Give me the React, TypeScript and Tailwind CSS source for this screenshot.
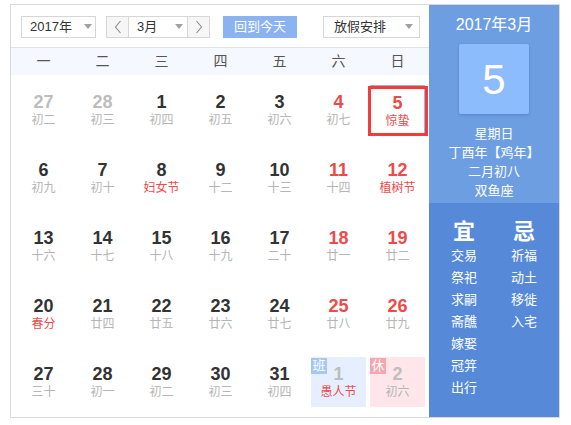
import React from 'react';

type Day = {
  n: number;
  l: string;
  other?: boolean;
  wknd?: boolean;
  fest?: boolean;
  sel?: boolean;
  tag?: 'ban' | 'xiu';
};

const rows: Day[][] = [
  [
    { n: 27, l: '初二', other: true },
    { n: 28, l: '初三', other: true },
    { n: 1, l: '初四' },
    { n: 2, l: '初五' },
    { n: 3, l: '初六' },
    { n: 4, l: '初七', wknd: true },
    { n: 5, l: '惊蛰', wknd: true, fest: true, sel: true },
  ],
  [
    { n: 6, l: '初九' },
    { n: 7, l: '初十' },
    { n: 8, l: '妇女节', fest: true },
    { n: 9, l: '十二' },
    { n: 10, l: '十三' },
    { n: 11, l: '十四', wknd: true },
    { n: 12, l: '植树节', wknd: true, fest: true },
  ],
  [
    { n: 13, l: '十六' },
    { n: 14, l: '十七' },
    { n: 15, l: '十八' },
    { n: 16, l: '十九' },
    { n: 17, l: '二十' },
    { n: 18, l: '廿一', wknd: true },
    { n: 19, l: '廿二', wknd: true },
  ],
  [
    { n: 20, l: '春分', fest: true },
    { n: 21, l: '廿四' },
    { n: 22, l: '廿五' },
    { n: 23, l: '廿六' },
    { n: 24, l: '廿七' },
    { n: 25, l: '廿八', wknd: true },
    { n: 26, l: '廿九', wknd: true },
  ],
  [
    { n: 27, l: '三十' },
    { n: 28, l: '初一' },
    { n: 29, l: '初二' },
    { n: 30, l: '初三' },
    { n: 31, l: '初四' },
    { n: 1, l: '愚人节', other: true, fest: true, tag: 'ban' },
    { n: 2, l: '初六', other: true, tag: 'xiu' },
  ],
];

const weekdays = ['一', '二', '三', '四', '五', '六', '日'];
const yi = ['交易', '祭祀', '求嗣', '斋醮', '嫁娶', '冠笄', '出行'];
const ji = ['祈福', '动土', '移徙', '入宅'];

function Caret() {
  return <span className="w-0 h-0 border-x-[4px] border-x-transparent border-t-[5px] border-t-[#a0a0a0]" />;
}

function Chevron({ dir }: { dir: 'l' | 'r' }) {
  return (
    <svg width="8" height="14" viewBox="0 0 8 14" fill="none">
      <path
        d={dir === 'l' ? 'M6.5 1 L1.5 7 L6.5 13' : 'M1.5 1 L6.5 7 L1.5 13'}
        stroke="#8a8a8a"
        strokeWidth="1.1"
      />
    </svg>
  );
}

function Cell({ d }: { d: Day }) {
  const numColor = d.other ? 'text-[#bdbdbd]' : d.wknd ? 'text-[#ee4a4a]' : 'text-[#333]';
  const lunarColor = d.fest ? 'text-[#ee4a4a]' : 'text-[#b5b5b5]';
  const bg =
    d.tag === 'ban' ? 'bg-[#e5efff]' : d.tag === 'xiu' ? 'bg-[#ffe6ea]' : '';
  return (
    <div className="pt-[8px] pl-[2px]">
      <div
        className={`relative w-[55px] h-[50px] flex flex-col items-center pt-[7px] ${bg} ${
          d.sel ? 'border border-[#8fb5f2] pt-[6px]' : ''
        }`}
      >
        {d.sel && (
          <span className="absolute -left-[3px] -right-[4px] top-[0px] -bottom-[2px] border-[3px] border-[#f53a3a]" />
        )}
        {d.tag && (
          <span
            className={`absolute left-0 top-[1px] w-[16px] h-[16px] text-white text-[13px] leading-[16px] text-center ${
              d.tag === 'ban' ? 'bg-[#a5c6f7]' : 'bg-[#f7a6b0]'
            }`}
          >
            {d.tag === 'ban' ? '班' : '休'}
          </span>
        )}
        <span className={`text-[18px] leading-[20px] font-bold ${numColor}`}>{d.n}</span>
        <span className={`text-[12px] leading-[16px] ${lunarColor}`}>{d.l}</span>
      </div>
    </div>
  );
}

export default function App() {
  return (
    <div
      className="pl-[10px] pt-[4px] bg-white w-[571px] h-[425px]"
      style={{ fontFamily: '"Liberation Sans", "Noto Sans CJK SC", sans-serif' }}
    >
      <div className="w-[550px] h-[414px] border border-[#d9d9d9] flex">
        <div className="w-[418px] flex flex-col">
          <div className="h-[43px] border-b border-[#e3e3e3] flex items-center pl-[10px] pt-[1px] text-[13px] text-[#333]">
            <div className="w-[75px] h-[22px] border border-[#d6d6d6] flex items-center justify-between pl-[8px] pr-[3px]">
              <span>2017年</span>
              <Caret />
            </div>
            <div className="ml-[10px] w-[104px] h-[22px] border border-[#d6d6d6] flex">
              <div className="w-[22px] bg-[#f6f6f6] border-r border-[#d6d6d6] flex items-center justify-center">
                <Chevron dir="l" />
              </div>
              <div className="flex-1 flex items-center justify-between pl-[8px] pr-[4px]">
                <span>3月</span>
                <Caret />
              </div>
              <div className="w-[22px] bg-[#f6f6f6] border-l border-[#d6d6d6] flex items-center justify-center">
                <Chevron dir="r" />
              </div>
            </div>
            <div className="ml-[13px] w-[74px] h-[22px] bg-[#8bb3f1] text-white flex items-center justify-center">
              回到今天
            </div>
            <div className="ml-[26px] w-[97px] h-[22px] border border-[#d6d6d6] flex items-center justify-between pl-[10px] pr-[6px]">
              <span>放假安排</span>
              <Caret />
            </div>
          </div>
          <div className="h-[27px] bg-[#f5f8fe] grid grid-cols-[repeat(7,59px)] pl-[3px] items-center text-[14px] text-[#555]">
            {weekdays.map((w) => (
              <div key={w} className="text-center">
                {w}
              </div>
            ))}
          </div>
          <div className="flex-1 pt-[2px] pl-[3px] grid grid-cols-[repeat(7,59px)] grid-rows-5">
            {rows.flat().map((d, i) => (
              <Cell key={i} d={d} />
            ))}
          </div>
        </div>
        <div className="flex-1 flex flex-col text-white">
          <div className="h-[198px] bg-[#6e9ee2] flex flex-col items-center pt-[10px]">
            <div className="text-[16px] leading-[20px]">2017年3月</div>
            <div className="mt-[9px] w-[70px] h-[70px] bg-[#8dbcfd] rounded-[2px] shadow-[0_1px_3px_rgba(40,80,160,0.35)] flex items-center justify-center text-[42px]">
              5
            </div>
            <div className="mt-[10px] text-[13px] leading-[19px] text-center">
              <div>星期日</div>
              <div>丁酉年【鸡年】</div>
              <div>二月初八</div>
              <div>双鱼座</div>
            </div>
          </div>
          <div className="flex-1 bg-[#568ad9] flex pl-[5px] pt-[16px]">
            <div className="w-[60px] flex flex-col items-center">
              <div className="text-[22px] leading-[26px] font-bold">宜</div>
              {yi.map((t) => (
                <div key={t} className="text-[13px] leading-[22px]">
                  {t}
                </div>
              ))}
            </div>
            <div className="w-[60px] flex flex-col items-center">
              <div className="text-[22px] leading-[26px] font-bold">忌</div>
              {ji.map((t) => (
                <div key={t} className="text-[13px] leading-[22px]">
                  {t}
                </div>
              ))}
            </div>
          </div>
        </div>
      </div>
    </div>
  );
}
